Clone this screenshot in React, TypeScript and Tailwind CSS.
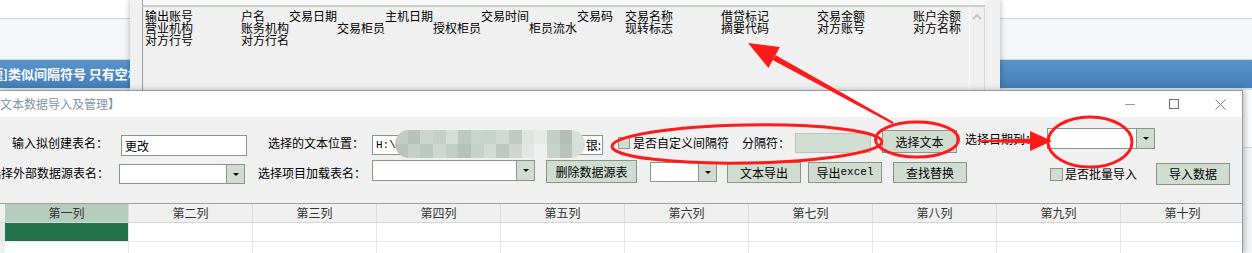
import React from 'react';

const listItems = [
  { t: '输出账号', c: 'col-start-[1] row-start-1' },
  { t: '户名', c: 'col-start-[3] row-start-1' },
  { t: '交易日期', c: 'col-start-[4] row-start-1' },
  { t: '主机日期', c: 'col-start-[6] row-start-1' },
  { t: '交易时间', c: 'col-start-[8] row-start-1' },
  { t: '交易码', c: 'col-start-[10] row-start-1' },
  { t: '交易名称', c: 'col-start-[11] row-start-1' },
  { t: '借贷标记', c: 'col-start-[13] row-start-1' },
  { t: '交易金额', c: 'col-start-[15] row-start-1' },
  { t: '账户余额', c: 'col-start-[17] row-start-1' },
  { t: '营业机构', c: 'col-start-[1] row-start-2' },
  { t: '账务机构', c: 'col-start-[3] row-start-2' },
  { t: '交易柜员', c: 'col-start-[5] row-start-2' },
  { t: '授权柜员', c: 'col-start-[7] row-start-2' },
  { t: '柜员流水', c: 'col-start-[9] row-start-2' },
  { t: '现转标志', c: 'col-start-[11] row-start-2' },
  { t: '摘要代码', c: 'col-start-[13] row-start-2' },
  { t: '对方账号', c: 'col-start-[15] row-start-2' },
  { t: '对方名称', c: 'col-start-[17] row-start-2' },
  { t: '对方行号', c: 'col-start-[1] row-start-3' },
  { t: '对方行名', c: 'col-start-[3] row-start-3' },
];

const columns = ['第一列', '第二列', '第三列', '第四列', '第五列', '第六列', '第七列', '第八列', '第九列', '第十列'];

const blurBlocks = [
  'bg-[#c2cbc4]', 'bg-[#b7c2ba]', 'bg-[#cdd5cf]', 'bg-[#c6cec8]', 'bg-[#d6ddd8]', 'bg-[#bfc9c1]', 'bg-[#cbd3cd]', 'bg-[#c9d1cb]',
  'bg-[#d2d9d4]', 'bg-[#c0cac2]', 'bg-[#dde3df]', 'bg-[#e6eae7]', 'bg-[#c4cdc6]', 'bg-[#b3beb6]', 'bg-[#d9dfdb]',
  'bg-[#b9c3bb]', 'bg-[#c7cfc9]', 'bg-[#bdc7bf]', 'bg-[#d0d7d2]', 'bg-[#c3ccc5]', 'bg-[#b6c1b9]', 'bg-[#c8d0ca]', 'bg-[#d4dbd6]',
  'bg-[#bfc8c1]', 'bg-[#cfd6d1]', 'bg-[#e2e7e4]', 'bg-[#eef1ef]', 'bg-[#cad2cc]', 'bg-[#b8c3bb]', 'bg-[#d7ddd9]',
];

const Btn: React.FC<{ className: string; children: React.ReactNode }> = ({ className, children }) => (
  <div
    className={`flex shrink-0 items-center justify-center border border-[#879787] bg-[#d0dcd0] text-[12px] text-black ${className}`}
  >
    {children}
  </div>
);

const Combo: React.FC<{ className: string }> = ({ className }) => (
  <div className={`flex shrink-0 border border-[#879787] bg-white ${className}`}>
    <div className="flex-1" />
    <div className="flex w-[18px] items-center justify-center border-l border-[#879787] bg-[#cfdccf]">
      <div className="h-0 w-0 border-x-[3px] border-t-[3px] border-x-transparent border-t-black" />
    </div>
  </div>
);

const Label: React.FC<{ className: string; children: React.ReactNode }> = ({ className, children }) => (
  <div className={`shrink-0 whitespace-nowrap text-[12px] leading-[16px] text-black ${className}`}>{children}</div>
);

export default function App() {
  return (
    <div className="relative h-[253px] w-[1252px] overflow-hidden font-['Noto_Sans_CJK_SC','Liberation_Sans',sans-serif]">
      {/* web page behind */}
      <div className="flex h-full flex-col">
        <div className="h-[18px] bg-white" />
        <div className="h-px bg-[#c4d5e3]" />
        <div className="h-[40px] bg-[#f4f7fa]" />
        <div className="h-px bg-[#c4d5e3]" />
        <div className="flex h-[28px] items-center overflow-hidden bg-linear-to-b from-[#5893ca] to-[#447fba]">
          <span className="ml-[-10px] whitespace-nowrap text-[13px] font-bold text-white">题]类似间隔符号 只有空格</span>
        </div>
        <div className="h-[2px] bg-[#d7e3ee]" />
        <div className="h-[57px] bg-[#fbfcfd]" />
        <div className="h-px bg-[#c4d5e3]" />
        <div className="flex-1 bg-[#f4f7fa]" />
      </div>

      {/* field list window */}
      <div className="absolute left-[130px] top-0 h-[90px] w-[870px] bg-[#f0f0f0] shadow-[0_0_6px_rgba(0,0,0,0.3)]">
        <div className="ml-[12px] h-[7px] w-[843px] border-b-2 border-l border-b-[#c6d3c6] border-l-[#a0a0a0] bg-[#f7f8f7]" />
        <div className="ml-[12px] flex h-[83px] w-[843px] border-l border-[#9c9c9c] bg-[#f0f0f0]">
          <div className="grid flex-1 grid-cols-[repeat(17,48px)] grid-rows-[repeat(3,12px)] pl-[2px] pt-[3px] text-[12px] leading-[12px] text-black">
            {listItems.map((it) => (
              <span key={it.t} className={`block h-[12px] whitespace-nowrap ${it.c}`}>
                {it.t}
              </span>
            ))}
          </div>
          <div className="flex w-[16px] justify-center border-l border-r border-l-white border-r-[#d8d8d8] pt-[7px]">
            <svg width="10" height="6" viewBox="0 0 10 6">
              <polyline points="1,5 5,1 9,5" fill="none" stroke="#c4c4c4" strokeWidth="2" />
            </svg>
          </div>
        </div>
      </div>

      {/* import dialog */}
      <div className="absolute left-0 top-[90px] flex h-[163px] w-[1243px] flex-col overflow-hidden border-r border-t border-[#9a9a9a] bg-[#f0f0f0] shadow-[2px_0_6px_rgba(0,0,0,0.25)]">
        <div className="flex h-[26px] shrink-0 items-center bg-white">
          <span className="ml-[-12px] whitespace-nowrap text-[12px] text-[#8294a6]">【文本数据导入及管理】</span>
          <div className="ml-auto flex items-center">
            <div className="h-px w-[10px] bg-[#9a9a9a]" />
            <div className="ml-[34px] h-[10px] w-[10px] border border-[#707070]" />
            <svg className="ml-[36px] mr-[16px]" width="11" height="11" viewBox="0 0 11 11">
              <path d="M0.5 0.5 L10.5 10.5 M10.5 0.5 L0.5 10.5" stroke="#808080" strokeWidth="1" />
            </svg>
          </div>
        </div>

        <div className="flex flex-1 flex-col">
          <div className="mt-[10px] flex h-[31px] items-start">
            <Label className="ml-[12px] mt-[8px] w-[109px]">输入拟创建表名：</Label>
            <div className="mt-[8px] flex h-[21px] w-[126px] shrink-0 items-center border border-[#879787] bg-white pl-[3px] text-[12px] text-black">
              更改
            </div>
            <Label className="ml-[21px] mt-[8px] w-[104px]">选择的文本位置：</Label>
            <div className="relative mt-[8px] flex h-[20px] w-[231px] shrink-0 items-center justify-between border border-[#879787] bg-white text-[12px] text-black">
              <span className="pl-[3px] font-['Liberation_Mono',monospace] text-[11px]">H:\</span>
              <span className="pr-[1px]">银:</span>
              <div className="absolute left-[22px] top-[-6px] grid h-[28px] w-[190px] grid-cols-[repeat(15,1fr)] grid-rows-2 overflow-hidden rounded-full">
                {blurBlocks.map((b, i) => (
                  <div key={i} className={b} />
                ))}
              </div>
            </div>
            <div className="ml-[15px] mt-[10px] h-[12px] w-[12px] shrink-0 border border-[#879787] bg-[#cfdccf]" />
            <Label className="ml-[3px] mt-[8px] w-[109px]">是否自定义间隔符</Label>
            <Label className="mt-[8px] w-[53px]">分隔符：</Label>
            <div className="mt-[6px] h-[20px] w-[76px] shrink-0 border border-[#b9c6b9] bg-[#d3ded3]" />
            <Btn className="ml-[11px] mt-[3px] h-[23px] w-[75px]">选择文本</Btn>
            <Label className="ml-[8px] mt-[4px] w-[82px]">选择日期列：</Label>
            <Combo className="mt-[1px] h-[21px] w-[108px]" />
          </div>

          <div className="mt-[2px] flex h-[25px] items-start">
            <Label className="ml-[-11px] mt-[5px] w-[130px]">选择外部数据源表名：</Label>
            <Combo className="mt-[4px] h-[20px] w-[126px]" />
            <Label className="ml-[13px] mt-[5px] w-[114px]">选择项目加载表名：</Label>
            <Combo className="h-[21px] w-[163px]" />
            <Btn className="ml-[11px] h-[23px] w-[91px]">删除数据源表</Btn>
            <Combo className="ml-[13px] mt-[2px] h-[20px] w-[67px]" />
            <Btn className="ml-[10px] mt-[2px] h-[21px] w-[74px]">文本导出</Btn>
            <Btn className="ml-[7px] mt-[2px] h-[21px] w-[74px]">
              导出<span className="font-['Liberation_Mono',monospace] text-[11px]">excel</span>
            </Btn>
            <Btn className="ml-[11px] mt-[2px] h-[21px] w-[74px]">查找替换</Btn>
            <div className="ml-[83px] mt-[8px] h-[13px] w-[13px] shrink-0 border border-[#879787] bg-[#cfdccf]" />
            <Label className="ml-[2px] mt-[6px] w-[91px]">是否批量导入</Label>
            <Btn className="mt-[3px] h-[22px] w-[74px]">导入数据</Btn>
          </div>
        </div>

        {/* data grid */}
        <div className="flex h-[50px] shrink-0 flex-col border-t border-[#a0a0a0] bg-white">
          <div className="flex h-[19px] shrink-0 border-b border-[#d6d6d6] bg-[#f0f0f0]">
            <div className="w-[5px] shrink-0" />
            {columns.map((c, i) => (
              <div
                key={c}
                className={`flex w-[124px] shrink-0 items-center justify-center border-r border-[#dcdcdc] text-[12px] text-[#333] ${
                  i === 0 ? 'bg-[#b5cdbf]' : ''
                }`}
              >
                {c}
              </div>
            ))}
          </div>
          <div className="flex h-[19px] shrink-0 border-b border-[#e6e6e6]">
            <div className="w-[5px] shrink-0 bg-[#e3ebe6]" />
            {columns.map((c, i) => (
              <div
                key={c}
                className={`w-[124px] shrink-0 border-r border-[#e6e6e6] ${i === 0 ? 'bg-[#227349]' : ''}`}
              />
            ))}
          </div>
          <div className="flex flex-1">
            <div className="w-[5px] shrink-0 bg-[#f0f0f0]" />
            {columns.map((c) => (
              <div key={c} className="w-[124px] shrink-0 border-r border-[#e6e6e6]" />
            ))}
          </div>
        </div>
      </div>

      {/* red annotations */}
      <svg className="pointer-events-none absolute left-0 top-0" width="1252" height="253" viewBox="0 0 1252 253">
        <ellipse cx="747" cy="144" rx="135" ry="19" transform="rotate(-1 747 144)" fill="none" stroke="#ff1a1a" strokeWidth="3" />
        <ellipse cx="917" cy="139.5" rx="41.5" ry="17.5" fill="none" stroke="#ff1a1a" strokeWidth="3" />
        <ellipse cx="1090" cy="142" rx="42" ry="25" fill="none" stroke="#ff1a1a" strokeWidth="3" />
        <polygon points="893.5,122.1 892.5,123.9 772.6,60 775.8,55.2" fill="#ff1a1a" />
        <polygon points="748,43 780,47.1 768.4,68.1" fill="#ff1a1a" />
        <polygon points="978,140.2 978,141.8 1032,143.5 1032,138.5" fill="#ff1a1a" />
        <polygon points="1052,141 1030,131 1030,151" fill="#ff1a1a" />
      </svg>
    </div>
  );
}
